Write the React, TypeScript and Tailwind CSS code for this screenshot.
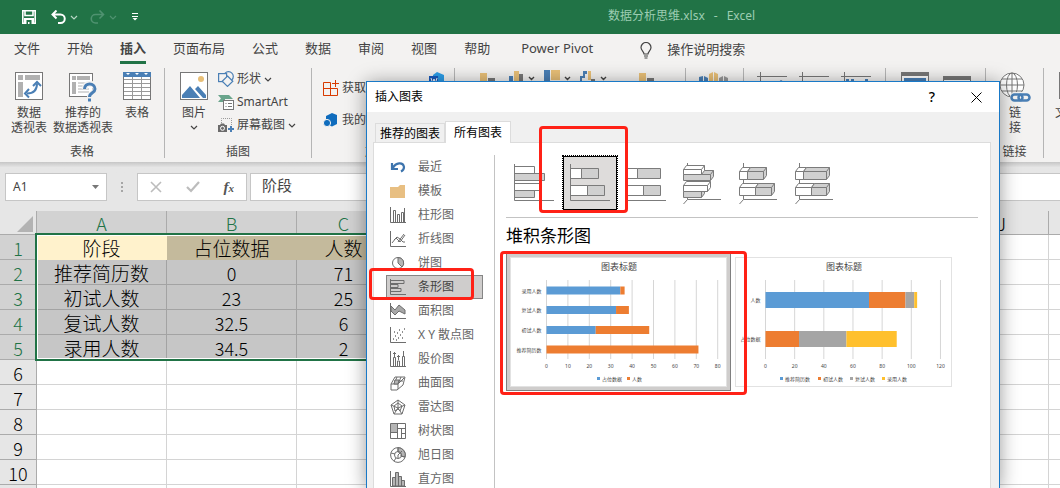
import type { ReactNode } from 'react';
import clsx from 'clsx';

const TABS = ['文件', '开始', '插入', '页面布局', '公式', '数据', '审阅', '视图', '帮助'];

// columns D to I lie under the dialog
const COLUMNS = ['A', 'B', 'C', '', '', '', '', '', '', 'J', ''];

const ROWS = [
  ['阶段', '占位数据', '人数'],
  ['推荐简历数', '0', '71'],
  ['初试人数', '23', '25'],
  ['复试人数', '32.5', '6'],
  ['录用人数', '34.5', '2'],
  [], [], [], [], [], [],
];

const BLUE = '#5b9bd5';
const ORANGE = '#ed7d31';
const GRAY = '#a5a5a5';
const YELLOW = '#ffc02d';

/* ---------- small shared drawings ---------- */

function Caret({ className = 'text-[#444]' }: { className?: string }) {
  return (
    <svg width="8" height="8" viewBox="0 0 8 8" className={clsx('shrink-0', className)} fill="none" stroke="currentColor" strokeWidth="1.2">
      <path d="M1 3l3 3 3-3" />
    </svg>
  );
}

/* ---------- ribbon icons ---------- */

const PivotIcon = (
  <svg width="28" height="28" viewBox="0 0 28 28">
    <rect x=".5" y=".5" width="27" height="27" fill="#fff" stroke="#777" />
    <path d="M3 3h5v5H3zM10 3h15v5H10zM3 10h5v15H3z" fill="#b1b1b1" />
    <path d="M12 21.500c6 0 10-3 10-10" fill="none" stroke="#4a7fb5" strokeWidth="2" />
    <path d="M18 14l4-4 4 4M14 17l-4 4.500 4 4" fill="none" stroke="#4a7fb5" strokeWidth="2" />
  </svg>
);

const RecommendIcon = (
  <svg width="28" height="30" viewBox="0 0 28 30">
    <rect x=".5" y="1.500" width="23" height="23" fill="#fff" stroke="#777" />
    <path d="M3 4h4v4H3zM8 4h13v4H8zM3 10h4v12H3z" fill="#b1b1b1" />
    <path d="M9 11h11M9 14h11M9 17h11M9 20h11" stroke="#b1b1b1" />
    <path d="M15.500 17c0-7 11-7 11 0 0 4-5.500 4-5.500 8" fill="none" stroke="#f3f2f1" strokeWidth="6" />
    <path d="M15.500 17c0-7 10.500-6.500 10.500 0 0 4-5.500 3.500-5.500 8" fill="none" stroke="#4a7fb5" strokeWidth="3" />
    <rect x="19" y="26.500" width="3" height="3" fill="#4a7fb5" />
  </svg>
);

const TableIcon = (
  <svg width="28" height="28" viewBox="0 0 28 28">
    <rect x=".5" y=".5" width="27" height="27" fill="#fff" stroke="#777" />
    <path d="M0 0h28v5H0z" fill="#4a7fb5" />
    <path d="M3 1h4l-2 2zM12 1h4l-2 2zM21 1h4l-2 2z" fill="#fff" />
    <path d="M1 7.500h26M1 11.500h26M1 15.500h26M1 19.500h26M1 23.500h26M9.500 5v22M18.500 5v22" stroke="#9a9a9a" />
  </svg>
);

const PictureIcon = (
  <svg width="28" height="28" viewBox="0 0 28 28">
    <rect x=".5" y=".5" width="27" height="27" fill="#fff" stroke="#777" />
    <circle cx="21" cy="7" r="3" fill="#e8bf77" />
    <path d="M2 26v-3l8-9 10 12zM15 17l3-3 8 9v3h-3z" fill="#4a7fb5" />
  </svg>
);

const ShapesIcon = (
  <svg width="16" height="16" viewBox="0 0 16 16" fill="#f3f2f1" stroke="#4a7fb5" strokeWidth="1.200">
    <circle cx="10.500" cy="5.500" r="4.800" />
    <rect x=".6" y="2.600" width="8" height="8" />
    <path d="M9.500 5l5.300 5.200-5.300 5.200-5.300-5.200z" />
  </svg>
);

const SmartArtIcon = (
  <svg width="16" height="16" viewBox="0 0 16 16">
    <path d="M0 1h11l4 4H7v3H0l3-3.500z" fill="#6aa58c" />
    <rect x="5.500" y="6.500" width="10" height="9" fill="#fff" stroke="#777" />
    <path d="M7.500 9.500h1M10 9.500h4M7.500 12.500h1M10 12.500h4" stroke="#777" />
  </svg>
);

const ScreenshotIcon = (
  <svg width="16" height="16" viewBox="0 0 16 16">
    <path d="M3.500 6V1.500h10V10" fill="none" stroke="#999" strokeDasharray="1 1" />
    <path d="M0 8h2l1-1.500h3L7 8h2v7H0z" fill="#6b6b6b" />
    <circle cx="4.500" cy="11.300" r="2" fill="#6b6b6b" stroke="#fff" />
    <path d="M13 9v6M10 12h6" stroke="#4a7fb5" strokeWidth="2" />
  </svg>
);

const StoreIcon = (
  <svg width="16" height="16" viewBox="0 0 16 16" fill="none" stroke="#d83b01">
    <path d="M.5 2.500h7v13h-7zM.5 8.500h14v7H.5M12.500 0v7M9 3.500h7" />
  </svg>
);

const AddinsIcon = (
  <svg width="16" height="16" viewBox="0 0 16 16">
    <path d="M3 4l6-3 5 2v9l-5 2.500L3 12z" fill="#0f6cbd" />
    <circle cx="4" cy="11" r="3.600" fill="#0f6cbd" stroke="#f3f2f1" />
  </svg>
);

const GlobeIcon = (
  <svg width="32" height="31" viewBox="0 0 32 31" fill="none">
    <circle cx="13" cy="13" r="12" fill="#fff" stroke="#777" />
    <ellipse cx="13" cy="13" rx="5.500" ry="12" stroke="#777" />
    <path d="M1 13h24M3 7h20M3 19h20M13 1v24" stroke="#777" />
    <rect x="11" y="20" width="21" height="11" rx="5" fill="#f3f2f1" />
    <rect x="12.500" y="22.500" width="11" height="6" rx="3" stroke="#4a7fb5" strokeWidth="2.500" />
    <rect x="19.500" y="22.500" width="11" height="6" rx="3" stroke="#4a7fb5" strokeWidth="2.500" />
  </svg>
);

/* ---------- ribbon ---------- */

function Group({ width, label, children }: { width: string; label?: string; children?: ReactNode }) {
  return (
    <div className={clsx('shrink-0 h-[90px] border-r border-[#b5b5b5] flex flex-col justify-between', width)}>
      <div className="flex pt-1 px-[5px]">{children}</div>
      {label && <span className="text-center leading-3">{label}</span>}
    </div>
  );
}

function BigButton({ icon, lines, width = 'w-12', caret }: { icon: ReactNode; lines: string[]; width?: string; caret?: boolean }) {
  return (
    <button className={clsx('shrink-0 flex flex-col items-center leading-[15px]', width)}>
      <span className="h-[33px] shrink-0">{icon}</span>
      {lines.map((line) => <span key={line} className="whitespace-nowrap">{line}</span>)}
      {caret && <span className="pt-[3px]"><Caret /></span>}
    </button>
  );
}

function SmallButton({ icon, label, caret }: { icon: ReactNode; label: string; caret?: boolean }) {
  return (
    <button className="h-[23px] flex items-center gap-[3px] whitespace-nowrap">
      {icon}
      {label}
      {caret && <Caret />}
    </button>
  );
}

function Ribbon() {
  return (
    <div className="h-24 pt-0.5 flex overflow-hidden bg-[#f3f2f1] text-xs text-[#444]">
      <Group width="w-[165px]" label="表格">
        <BigButton icon={PivotIcon} lines={['数据', '透视表']} />
        <BigButton icon={RecommendIcon} lines={['推荐的', '数据透视表']} width="w-[60px]" />
        <BigButton icon={TableIcon} lines={['表格']} />
      </Group>
      <Group width="w-[147px]" label="插图">
        <BigButton icon={PictureIcon} lines={['图片']} caret />
        <div className="flex flex-col -mt-[5px]">
          <SmallButton icon={ShapesIcon} label="形状" caret />
          <SmallButton icon={SmartArtIcon} label="SmartArt" />
          <SmallButton icon={ScreenshotIcon} label="屏幕截图" caret />
        </div>
      </Group>
      <Group width="w-[143px]" label="加载项">
        <div className="flex flex-col gap-[9px] pl-1.5 pt-1 w-28">
          <SmallButton icon={StoreIcon} label="获取" />
          <SmallButton icon={AddinsIcon} label="我的" />
        </div>
        <svg width="16" height="16" viewBox="0 0 16 16">
          <path d="M4 3l4-3 7 3v12H4z" fill="#2b9de8" />
          <path d="M0 4h9v9H0z" fill="#185abd" />
          <path d="M2 6l1.500 5L5 7l1.500 4L8 6" fill="none" stroke="#fff" />
        </svg>
      </Group>
      <Group width="w-[231px]">
        <svg width="180" height="22" viewBox="0 -2 180 22" className="-mt-0.5 ml-5 shrink-0">
          <path d="M0 1h7v19H0zM34 -1h5v20h-5zM71 -2h9v10h-9zM108 -1h3v9h-3zM159 1h7v19h-7z" fill="#e8bf77" />
          <path d="M8 6h7v14H8zM39 2h4v18h-4zM111 7h4v6h-4zM167 6h7v14h-7z" fill="#777" />
          <path d="M29 4h4v16h-4zM64 -2h6v20h-6zM100 4h3v-5h4v3h-2v4h-3v6h-2z" fill="#4a7fb5" />
          <path d="M49 5l2.500 2.500L54 5M85 5l2.500 2.500L90 5M121 5l2.500 2.500L126 5" fill="none" stroke="#444" strokeWidth="1.400" />
        </svg>
      </Group>
      <Group width="w-[58px]">
        <svg width="30" height="20" viewBox="0 0 30 20" className="ml-2 shrink-0">
          <path d="M0 5l4-1v16H0zM5 4l4 2v14H5z" fill="#4a7fb5" />
          <path d="M10 2l4-2v20h-4zM15 0l4 2v18h-4z" fill="#e8bf77" />
          <path d="M20 6l4-2v16h-4zM25 4l4 2v14h-4z" fill="#999" />
        </svg>
      </Group>
      <Group width="w-[142px]">
        <svg width="116" height="20" viewBox="0 0 116 20" className="ml-2 shrink-0">
          <path d="M0 4.500h30M3.500 0v20M42 4.500h30M45.500 0v20M84 4.500h30M87.500 0v20" stroke="#777" />
          <path d="M19 12l5-4 3 2M89 7h3v6h-3zM94 7h3v6h-3zM108 7h3v6h-3z" fill="#4a7fb5" />
        </svg>
      </Group>
      <Group width="w-[100px]">
        <svg width="72" height="24" viewBox="0 0 72 24" className="ml-2.5 shrink-0">
          <path d="M.5.500h27v23H.5zM42.500 4.500h27v19h-27z" fill="#fff" stroke="#777" />
          <path d="M0 0h28v4H0zM42 4h28v4H42z" fill="#777" />
          <path d="M3 6h22v12H3z" fill="#4a7fb5" />
        </svg>
      </Group>
      <Group width="w-[58px]" label="链接">
        <BigButton icon={GlobeIcon} lines={['链', '接']} />
      </Group>
      <Group width="w-[100px]">
        <BigButton icon={<svg width="28" height="28"><path d="M1 0v26h26V0z" fill="#fff" stroke="#777" strokeWidth="2" /></svg>} lines={['文本框']} />
      </Group>
    </div>
  );
}

function TitleBar() {
  return (
    <header className="h-[34px] shrink-0 flex items-center bg-[#217346] text-white">
      <div className="w-[608px] shrink-0 flex items-center pl-[22px]">
        <button aria-label="保存">
          <svg width="14" height="14" viewBox="0 0 14 14" fill="none" stroke="#fff" strokeWidth="1.600">
            <path d="M.8.800h12.400v12.400H.8zM3 1v4.500h8V1" />
            <path d="M2 8h10v6H2z" fill="#fff" stroke="none" />
            <path d="M4.500 10h5v4h-2v-2H6v2H4.500z" fill="#217346" stroke="none" />
          </svg>
        </button>
        <button aria-label="撤消" className="ml-[15px] flex items-center gap-1">
          <svg width="15" height="14" viewBox="0 0 15 14" fill="none" stroke="#fff" strokeWidth="2">
            <path d="M5.500.500L1.500 4.500l4 4M2 4.500h7.500a4 4 0 010 8.500H7" />
          </svg>
          <Caret className="text-[#b8d6c5]" />
        </button>
        <button aria-label="恢复" className="ml-3 flex items-center gap-1 text-[#4f9270]">
          <svg width="15" height="14" viewBox="0 0 15 14" fill="none" stroke="currentColor" strokeWidth="1.600">
            <path d="M9.500.500l4 4-4 4M13 4.500H5.500a4 4 0 000 8.500H8" />
          </svg>
          <Caret className="text-[#4f9270]" />
        </button>
        <button aria-label="自定义快速访问工具栏" className="ml-3.5">
          <svg width="8" height="8" viewBox="0 0 8 8" fill="#fff"><path d="M1 0h6v1H1zM1 3h6v1H1zM1.500 5h5L4 7.500z" /></svg>
        </button>
      </div>
      <span className="pb-[3px] flex gap-[9px] text-xs text-[#9dcdb2]">
        <span>数据分析思维.xlsx</span>
        <span>-</span>
        <span>Excel</span>
      </span>
    </header>
  );
}

function TabRow() {
  return (
    <nav className="h-8 shrink-0 flex items-center pl-3.5 bg-[#f3f2f1] text-[13px] text-[#444] whitespace-nowrap">
      <div className="flex gap-[27px]">
        {TABS.map((tab) => (
          <button
            key={tab}
            className={clsx(
              'h-7 border-b-3',
              tab === '插入' ? 'border-[#217346] font-bold' : 'border-transparent'
            )}
          >
            {tab}
          </button>
        ))}
      </div>
      <button className="ml-[31px] h-7 border-b-3 border-transparent">Power Pivot</button>
      <button className="ml-[46px] h-7 flex items-center gap-3.5">
        <svg width="14" height="17" viewBox="0 0 14 17" fill="none" stroke="#444" strokeWidth="1.200">
          <path d="M5 12c0-2.500-3-3.500-3-6.500a5 5 0 0110 0c0 3-3 4-3 6.500zM5 14h4M5.500 16h3" />
        </svg>
        操作说明搜索
      </button>
    </nav>
  );
}

function FormulaBar() {
  return (
    <div className="shrink-0 bg-[#e6e6e6] pb-2.5">
      <div className="h-[11px] bg-linear-to-b from-[#c6c6c6] to-[#e6e6e6] to-50%" />
      <div className="flex h-7 pl-[5px] text-xs text-[#444]">
        <button className="w-[102px] shrink-0 px-[7px] flex items-center justify-between bg-white border border-[#c6c6c6]">
          A1
          <svg width="7" height="4" viewBox="0 0 7 4" fill="#777"><path d="M0 0h7L3.500 4z" /></svg>
        </button>
        <div className="w-[30px] shrink-0 flex flex-col items-center justify-center gap-0.5">
          <i className="size-0.5 bg-[#a6a6a6]" />
          <i className="size-0.5 bg-[#a6a6a6]" />
          <i className="size-0.5 bg-[#a6a6a6]" />
        </div>
        <div className="w-[110px] shrink-0 px-3 flex items-center justify-between bg-white border border-[#c6c6c6]">
          <button aria-label="取消">
            <svg width="12" height="12" viewBox="0 0 12 12" stroke="#bcbcbc" strokeWidth="1.600"><path d="M1 1l10 10M11 1L1 11" /></svg>
          </button>
          <button aria-label="输入">
            <svg width="14" height="12" viewBox="0 0 14 12" fill="none" stroke="#bcbcbc" strokeWidth="2.200"><path d="M1 6l4 4 8-9" /></svg>
          </button>
          <button className="font-['Liberation_Serif',serif] italic font-bold text-[15px] leading-4 text-[#555]">
            f<span className="text-[11px]">x</span>
          </button>
        </div>
        <input
          aria-label="编辑栏"
          defaultValue="阶段"
          className="ml-[3px] min-w-0 flex-1 pl-[11px] pb-1 bg-white border border-r-0 border-[#c6c6c6] text-[15px] outline-none"
        />
      </div>
    </div>
  );
}

/* ---------- sheet ---------- */

function Sheet() {
  return (
    <div className="relative flex-1 min-h-0 overflow-hidden bg-white">
      <table className="table-fixed w-[1143px] border-separate border-spacing-0 text-center text-lg text-black font-['Noto_Sans_CJK_SC',sans-serif]">
        <colgroup>
          <col className="w-[37px]" />
          <col className="w-[130px]" />
          <col className="w-[130px]" />
          {COLUMNS.slice(2).map((_, i) => <col key={i} className="w-[94px]" />)}
        </colgroup>
        <thead>
          <tr className="h-6">
            <th className="p-0 bg-[#e6e6e6] border-r border-b border-[#ababab]">
              <svg width="16" height="16" viewBox="0 0 16 16" className="ml-[17px] mt-0.5" fill="#b3b3b3"><path d="M16 0v16H0z" /></svg>
            </th>
            {COLUMNS.map((c, i) => (
              <th
                key={i}
                className={clsx(
                  'p-0 pt-0.5 font-light leading-[21px] border-r border-b border-[#ababab]',
                  i < 3 ? 'bg-[#d2d2d2] text-[#217346]' : 'bg-[#e6e6e6]'
                )}
              >
                {c}
              </th>
            ))}
          </tr>
        </thead>
        <tbody>
          {ROWS.map((row, r) => (
            <tr key={r} className="h-[25px]">
              <th
                className={clsx(
                  'p-0 pt-0.5 font-light leading-[22px] border-r border-b border-[#ababab]',
                  r < 5 ? 'bg-[#d2d2d2] text-[#217346]' : 'bg-[#e6e6e6]'
                )}
              >
                {r < 10 && r + 1}
              </th>
              {COLUMNS.map((_, i) => (
                <td
                  key={i}
                  className={clsx(
                    'p-0 pt-0.5 leading-[22px] font-light border-r border-b',
                    r > 4 || i > 2
                      ? 'border-[#d4d4d4]'
                      : r === 0
                        ? i === 0 ? 'bg-[#fff2cc] border-[#fff2cc]' : 'bg-[#c4ba9c] border-[#c4ba9c]'
                        : 'bg-[#c6c6c6] border-[#a3a3a3]',
                    (r === 0 || i === 0) && 'text-[19px]'
                  )}
                >
                  {row[i]}
                </td>
              ))}
            </tr>
          ))}
        </tbody>
      </table>
      {/* selection outline */}
      <div className="absolute left-[35px] top-[22px] w-[358px] h-[128px] border-2 border-[#217346] inset-ring inset-ring-white" />
    </div>
  );
}

/* ---------- chart type list ---------- */

const axes = <path d="M.5 0v15.500H16" />;

const CHART_TYPES: { label: string; icon: ReactNode }[] = [
  { label: '最近', icon: <path d="M2 4v6h6M2.500 9.500C6 3 13 3 14 8c0 3-2 4-3 4.500" stroke="#3d74ad" strokeWidth="2.200" /> },
  { label: '模板', icon: <path d="M0 4h8l2-2h5v13H0z" fill="#e8bf82" stroke="none" /> },
  { label: '柱形图', icon: <>{axes}<path d="M3.500 15V3.500h2V15M7.500 15V7.500h2V15M11.500 15V5.500h2V15M14.500 15V1" /></> },
  { label: '折线图', icon: <>{axes}<path d="M2 12l4-5 4 4 5-7M4 9l3-3 3 2 3 3h2M8 11l6-8" /></> },
  { label: '饼图', icon: <><circle cx="8" cy="8" r="5.500" /><path d="M8 8V2.500a5.500 5.500 0 014 9.500z" fill="#b5b5b5" /></> },
  { label: '条形图', icon: <>{axes}<path d="M1 1.500h13v3H1M1 5.500h7v3H1M1 9.500h10v3H1" /></> },
  { label: '面积图', icon: <>{axes}<path d="M1 3l4 4 4-5 6 5v4l-6-3-4 4-4-4z" fill="#a8a8a8" /></> },
  { label: 'X Y 散点图', icon: <>{axes}<path d="M3 12h1M5 9h1M4 5h1M8 11h1M7 6h1M10 8h1M9 3h1M12 5h1M12 11h1M14 2h1M6 13h1" strokeWidth="1.500" /></> },
  { label: '股价图', icon: <>{axes}<path d="M3.500 15V6.500h2V15M7.500 15v-5h2v5M12.500 15V5.500h2V15M4.500 6V1M8.500 9V4M13.500 5V0M3 2.500h3M7 5.500h3" /></> },
  { label: '曲面图', icon: <><path d="M1 9l4-7h10l-2 8-6 5H1zM1 9h7l6-6M4 6h9M7 2L4 9M11 2L8 9v5" /><path d="M5 5h4l-1 4H4z" fill="#b5b5b5" /></> },
  { label: '雷达图', icon: <><path d="M8 1l7 5-3 9H4L1 6z" /><path d="M8 4l4 3-2 5-2-2-3 2-1-5zM8 1v8M15 6L8 9l4 6M1 6l7 3-4 6" /></> },
  { label: '树状图', icon: <><path d="M1 1h6v8H1z" fill="#b5b5b5" stroke="none" /><path d="M.5.500h15v15H.5zM7.500 1v14M8 5.500h7M11.500 6v9M12 10.500h3M1 9.500h6" /></> },
  { label: '旭日图', icon: <><circle cx="8" cy="8" r="7.400" /><path d="M8 .6a7.400 7.400 0 017 9.500L11 9a3 3 0 00-3-4z" fill="#b5b5b5" /><circle cx="8" cy="8" r="3.500" /><path d="M8 1v4M15 10l-4-1M6 11l-2 3M1 6l4 1M8 8l4-4M8 8v3.500" /></> },
  { label: '直方图', icon: <>{axes}<path d="M2.500 15V6.500h3V15zM5.500 15V1.500h3V15zM8.500 15V5.500h3V15zM11.500 15V9.500h3V15z" fill="#b5b5b5" /></> },
];

function TypeList() {
  return (
    <div className="w-[109px] shrink-0 border-r border-[#c3c3c3]">
      {CHART_TYPES.map(({ label, icon }) => (
        <button
          key={label}
          className={clsx(
            'w-[97px] h-6 flex items-center gap-3 pl-[3px] border whitespace-nowrap text-xs',
            label === '条形图' ? 'bg-[#cfcdcc] border-[#858585] text-[#444]' : 'border-transparent text-[#666]'
          )}
        >
          <svg width="16" height="16" viewBox="0 0 16 16" fill="none" stroke="#6d6d6d" className="shrink-0">{icon}</svg>
          {label}
        </button>
      ))}
    </div>
  );
}

/* ---------- bar chart sub types ---------- */

function Bar3D({ x, x2, y, h, fill = '#fff' }: { x: number; x2: number; y: number; h: number; fill?: string }) {
  return (
    <path
      fill={fill}
      d={`M${x} ${y}L${x + 3} ${y - 4}H${x2 + 3}V${y + h - 4}L${x2} ${y + h}H${x}ZM${x} ${y}H${x2}V${y + h}M${x2} ${y}L${x2 + 3} ${y - 4}`}
    />
  );
}

const flatAxis = <path d="M8.500 9v36.500h39.500" />;
const deepAxis = <path d="M13.500 8v36.500h33.500M13.500 44.500l-4 4.500" />;
const FILL = '#d0d0d0';

const SUB_TYPES = [
  {
    name: '簇状条形图',
    art: <><path d="M8.500 11.500h20v7h-20zM8.500 28.500h25v7h-25z" fill="#fff" /><path d="M8.500 18.500h30v7h-30zM8.500 35.500h20v7h-20z" fill={FILL} />{flatAxis}</>,
  },
  {
    name: '堆积条形图',
    art: <><path d="M8.500 13.500h11v10h-11zM8.500 30.500h17v10h-17z" fill="#fff" /><path d="M19.500 13.500h17v10h-17zM25.500 30.500h17v10h-17z" fill={FILL} />{flatAxis}</>,
  },
  {
    name: '百分比堆积条形图',
    art: <><path d="M8.500 13.500h11v10h-11zM8.500 30.500h17v10h-17z" fill="#fff" /><path d="M19.500 13.500h23v10h-23zM25.500 30.500h17v10h-17z" fill={FILL} />{flatAxis}</>,
  },
  {
    name: '三维簇状条形图',
    art: <>{deepAxis}<Bar3D x={9.5} x2={36.5} y={19.5} h={6} fill={FILL} /><Bar3D x={9.5} x2={27.5} y={14.5} h={5} /><Bar3D x={9.5} x2={27.5} y={36.5} h={6} fill={FILL} /><Bar3D x={9.5} x2={33.5} y={30.5} h={6} /></>,
  },
  {
    name: '三维堆积条形图',
    art: <>{deepAxis}<Bar3D x={9.5} x2={17.5} y={16.5} h={8} /><Bar3D x={17.5} x2={33.5} y={16.5} h={8} fill={FILL} /><Bar3D x={9.5} x2={25.5} y={32.5} h={8} /><Bar3D x={25.5} x2={41.5} y={32.5} h={8} fill={FILL} /></>,
  },
  {
    name: '三维百分比堆积条形图',
    art: <>{deepAxis}<Bar3D x={9.5} x2={17.5} y={16.5} h={8} /><Bar3D x={17.5} x2={40.5} y={16.5} h={8} fill={FILL} /><Bar3D x={9.5} x2={25.5} y={32.5} h={8} /><Bar3D x={25.5} x2={40.5} y={32.5} h={8} fill={FILL} /></>,
  },
];

/* ---------- previews ---------- */

type Preview = {
  x0: number;
  unit: number;
  ticks: number[];
  barHeight: number;
  bars: { label: string; y: number; parts: [number, string][] }[];
  legend: { x: number; label: string; color: string }[];
};

const STACKED: Preview = {
  x0: 36.5,
  unit: 2.14,
  ticks: [0, 10, 20, 30, 40, 50, 60, 70, 80],
  barHeight: 8,
  bars: [
    { label: '录用人数', y: 29.5, parts: [[34.5, BLUE], [2, ORANGE]] },
    { label: '复试人数', y: 49, parts: [[32.5, BLUE], [6, ORANGE]] },
    { label: '初试人数', y: 69, parts: [[23, BLUE], [25, ORANGE]] },
    { label: '推荐简历数', y: 88.5, parts: [[0, BLUE], [71, ORANGE]] },
  ],
  legend: [
    { x: 87, label: '占位数据', color: BLUE },
    { x: 117, label: '人数', color: ORANGE },
  ],
};

const SWITCHED: Preview = {
  x0: 30.5,
  unit: 1.458,
  ticks: [0, 20, 40, 60, 80, 100, 120],
  barHeight: 16,
  bars: [
    { label: '人数', y: 35, parts: [[71, BLUE], [25, ORANGE], [6, GRAY], [2, YELLOW]] },
    { label: '占位数据', y: 74, parts: [[0, BLUE], [23, ORANGE], [32.5, GRAY], [34.5, YELLOW]] },
  ],
  legend: [
    { x: 45, label: '推荐简历数', color: BLUE },
    { x: 83, label: '初试人数', color: ORANGE },
    { x: 115, label: '复试人数', color: GRAY },
    { x: 147, label: '录用人数', color: YELLOW },
  ],
};

function ChartPreview({ x0, unit, ticks, barHeight, bars, legend }: Preview) {
  return (
    <svg width="217" height="130" viewBox="0 0 217 130" className="bg-white" fontSize="5" fill="#444">
      <rect x=".5" y=".5" width="216" height="129" fill="none" stroke="#e2e2e2" />
      <text x="109" y="13" fontSize="9" textAnchor="middle">图表标题</text>
      {ticks.map((t) => (
        <g key={t}>
          <path d={`M${x0 + t * unit} 23v79`} stroke="#d6d6d6" />
          <text x={x0 + t * unit} y="111" textAnchor="middle">{t}</text>
        </g>
      ))}
      {bars.map(({ label, y, parts }) => {
        let sum = 0;
        return (
          <g key={label}>
            <text x={x0 - 5} y={y + barHeight / 2 + 2} textAnchor="end">{label}</text>
            {parts.map(([value, color]) => {
              const x = x0 + sum * unit;
              sum += value;
              return <rect key={color} x={x} y={y} width={value * unit} height={barHeight} fill={color} />;
            })}
          </g>
        );
      })}
      {legend.map(({ x, label, color }) => (
        <g key={label}>
          <rect x={x} y="120" width="3" height="3" fill={color} />
          <text x={x + 5} y="124">{label}</text>
        </g>
      ))}
    </svg>
  );
}

/* ---------- dialog ---------- */

function ChartDialog() {
  return (
    <div
      role="dialog"
      aria-label="插入图表"
      className="absolute left-[366px] right-[60px] top-[81px] bottom-0 flex flex-col border border-b-0 border-[#1979c7] bg-[#f0f0f0] shadow-[0_2px_18px_rgba(0,0,0,0.4)] text-xs text-black"
    >
      <div className="h-[30px] shrink-0 flex items-center bg-white pl-2 pr-px">
        <span className="flex-1">插入图表</span>
        <button className="w-11 text-sm font-medium">?</button>
        <button aria-label="关闭" className="w-11 flex justify-center">
          <svg width="11" height="11" viewBox="0 0 11 11" stroke="#000"><path d="M.5.500l10 10M10.500.500l-10 10" /></svg>
        </button>
      </div>

      <div className="flex items-end h-[31px] shrink-0 pl-2 z-10">
        <button className="w-[70px] h-5 border border-b-0 border-[#dcdcdc] leading-5">推荐的图表</button>
        <button className="w-[66px] h-[22px] border border-b-0 border-[#dcdcdc] bg-white leading-5">所有图表</button>
      </div>

      <div className="-mt-px ml-1.5 mr-2 flex-1 min-h-0 flex border border-b-0 border-[#dcdcdc] bg-white pl-3 pt-3 overflow-hidden">
        <TypeList />
        <div className="flex-1 min-w-0 pl-[11px] pr-3">
          <div className="flex h-[63px] border-b border-[#c3c3c3]">
            {SUB_TYPES.map(({ name, art }) => (
              <button
                key={name}
                aria-label={name}
                className={clsx(
                  'size-14 shrink-0 border bg-clip-padding',
                  name === '堆积条形图' ? 'bg-[#dedcdb] border-dotted border-black inset-ring inset-ring-black' : 'border-transparent'
                )}
              >
                <svg width="54" height="54" viewBox="1 1 54 54" fill="none" stroke="#7b7b7b">{art}</svg>
              </button>
            ))}
          </div>
          <h2 className="h-[35px] text-[17px] leading-9">堆积条形图</h2>
          <div className="flex items-center gap-1">
            <button className="shrink-0 p-[3px] border border-[#7f7f7f] bg-[#cfcdcc]">
              <ChartPreview {...STACKED} />
            </button>
            <button className="shrink-0">
              <ChartPreview {...SWITCHED} />
            </button>
          </div>
        </div>
      </div>

      {/* callouts */}
      <div className="absolute z-20 left-[172px] top-11 w-[89px] h-[87px] border-3 border-[#ff2116] rounded-sm" />
      <div className="absolute z-20 left-0.5 top-[186px] w-[105px] h-8 border-3 border-[#ff2116] rounded-sm" />
      <div className="absolute z-20 left-[133px] top-[169px] w-[247px] h-36 border-3 border-[#ff2116] rounded-sm" />
    </div>
  );
}

export default function App() {
  return (
    <div className="relative h-screen flex flex-col overflow-hidden font-['Noto_Sans','Noto_Sans_CJK_SC',sans-serif]">
      <TitleBar />
      <TabRow />
      <Ribbon />
      <FormulaBar />
      <Sheet />
      <ChartDialog />
    </div>
  );
}
